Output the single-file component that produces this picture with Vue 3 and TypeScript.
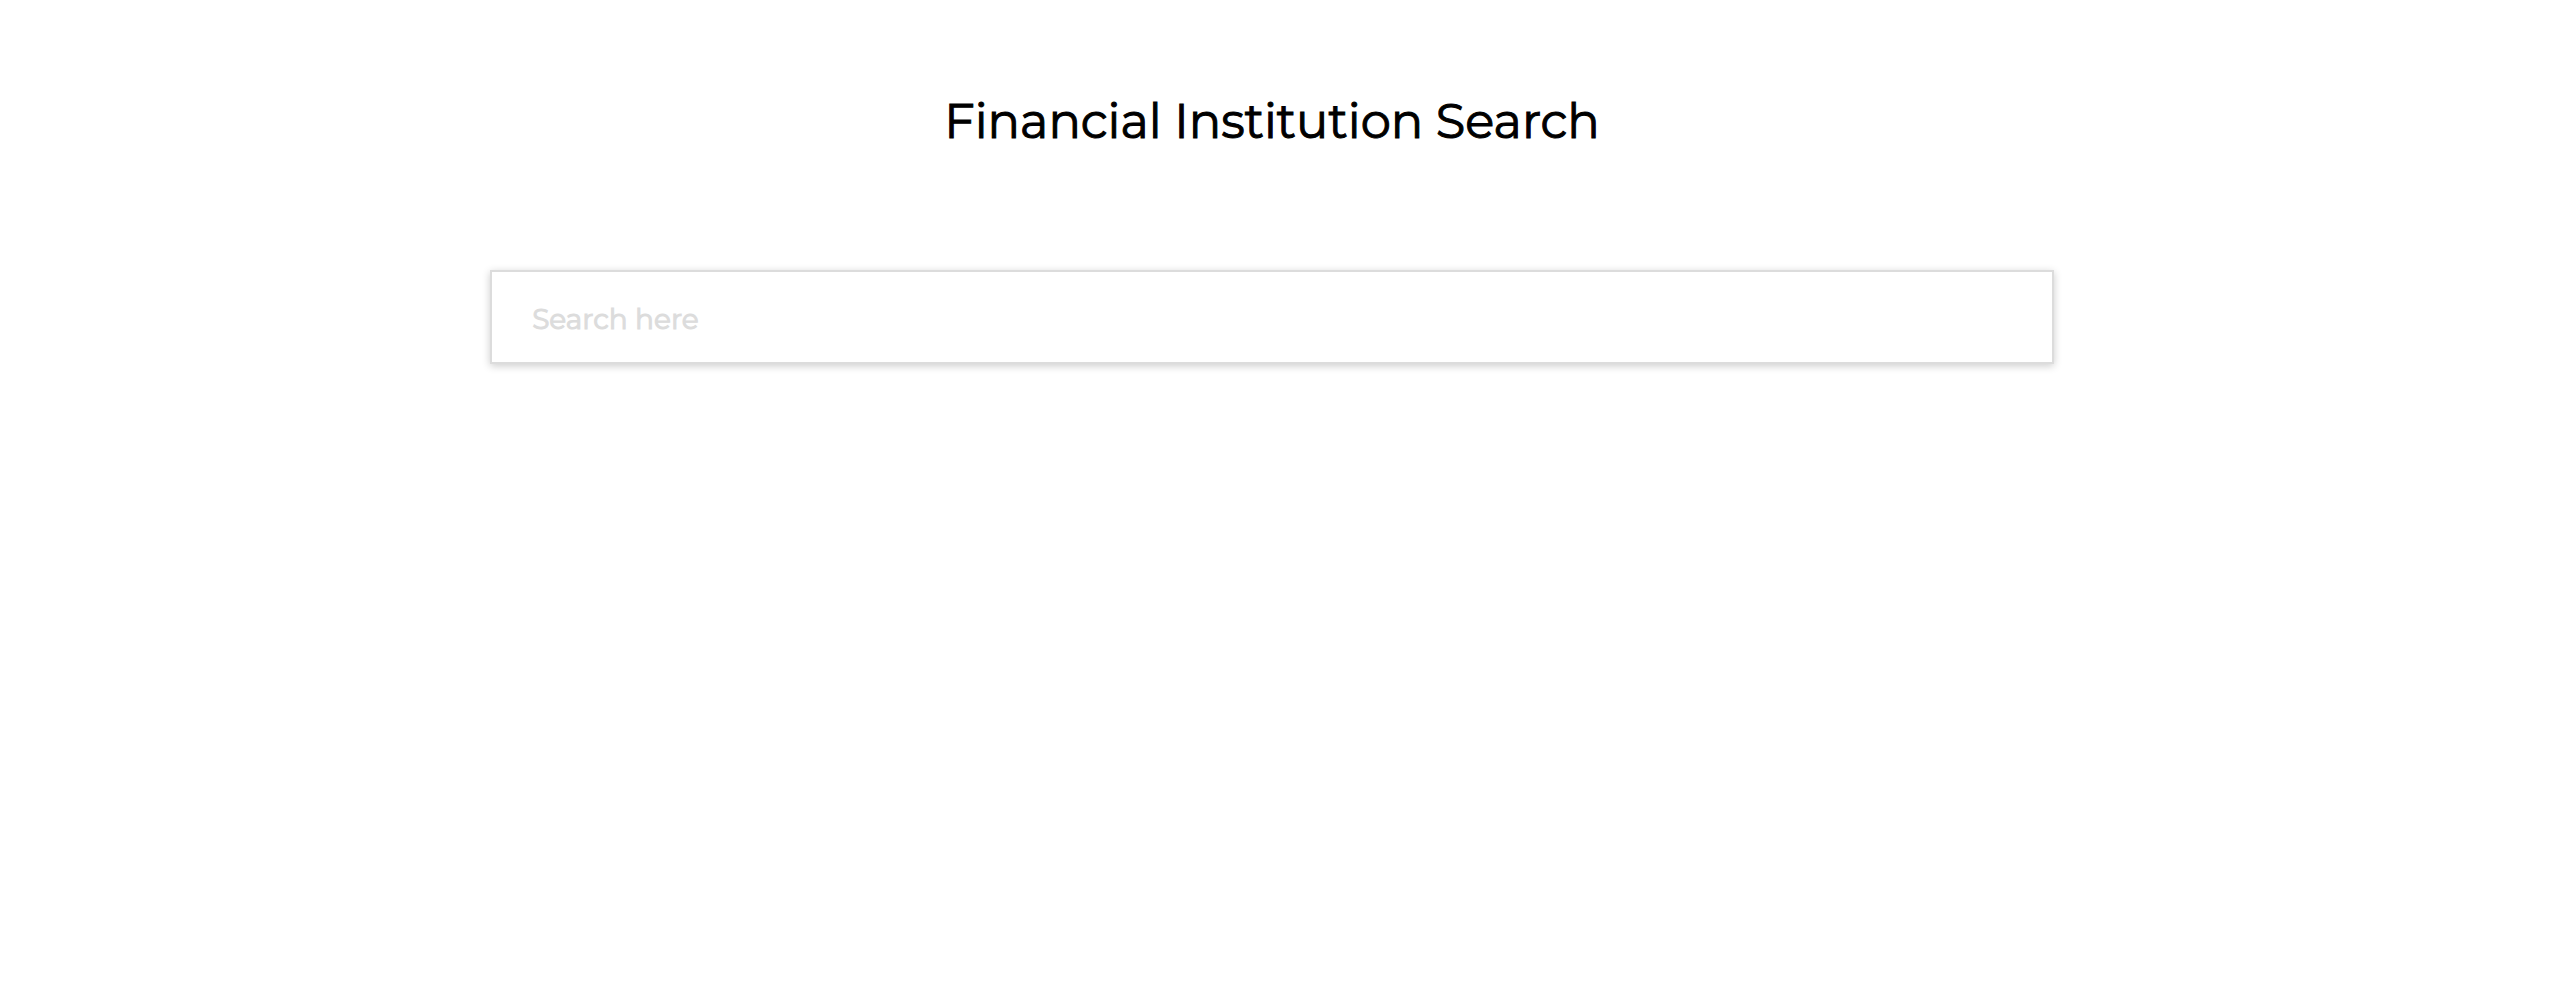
<script setup lang="ts">
import { ref } from 'vue'

const query = ref<string>('')
</script>

<template>
  <main class="page">
    <h1 class="title">Financial Institution Search</h1>
    <form class="search" role="search" @submit.prevent>
      <input
        v-model="query"
        class="search-input"
        type="text"
        placeholder="Search here"
        aria-label="Search financial institutions"
      />
    </form>
  </main>
</template>

<style>
body {
  margin: 0;
  background: #ffffff;
}
</style>

<style scoped>
.page {
  display: flex;
  flex-direction: column;
  align-items: center;
  gap: 117px;
  padding: 89px 30px 89px 24px;
  box-sizing: border-box;
  font-family: Montserrat, Inter, "Liberation Sans", sans-serif;
}

.title {
  margin: 0;
  font-size: 48px;
  line-height: 64px;
  font-weight: 400;
  -webkit-text-stroke: 1px #000000;
  color: #000000;
  text-align: center;
}

.search {
  width: 62.65%;
}

.search-input {
  display: block;
  width: 100%;
  height: 94px;
  box-sizing: border-box;
  padding: 4px 40px 0;
  border: 2px solid #dcdcdc;
  border-radius: 0;
  outline: none;
  background: #ffffff;
  box-shadow: 0 2px 8px rgba(0, 0, 0, 0.2);
  font-family: inherit;
  font-size: 28px;
  font-weight: 400;
  color: #000000;
}

.search-input::placeholder {
  color: #dcdcdc;
  -webkit-text-stroke: 1px #dcdcdc;
  opacity: 1;
}
</style>
